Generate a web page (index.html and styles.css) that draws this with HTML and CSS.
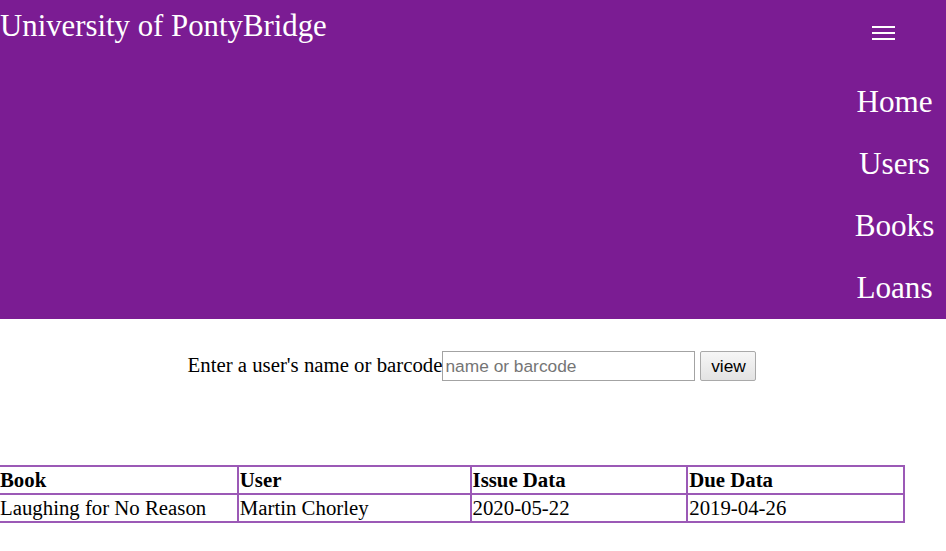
FILE: index.html
```html
<!DOCTYPE html>
<html>
<head>
<meta charset="utf-8">
<title>University of PontyBridge</title>
<link rel="stylesheet" href="styles.css">
</head>
<body>
<header class="site-header">
  <h1 class="site-title">University of PontyBridge</h1>
  <div class="nav-col">
    <div class="hamburger"><span></span><span></span><span></span></div>
    <nav class="nav">
      <a href="#">Home</a>
      <a href="#">Users</a>
      <a href="#">Books</a>
      <a href="#">Loans</a>
    </nav>
  </div>
</header>
<main>
  <form class="search">
    <label class="search-label" for="q">Enter a user's name or barcode</label><input id="q" class="search-input" type="text" placeholder="name or barcode"><button class="search-btn" type="button">view</button>
  </form>
  <table class="loans">
    <thead>
      <tr><th>Book</th><th>User</th><th>Issue Data</th><th>Due Data</th></tr>
    </thead>
    <tbody>
      <tr><td>Laughing for No Reason</td><td>Martin Chorley</td><td>2020-05-22</td><td>2019-04-26</td></tr>
    </tbody>
  </table>
</main>
</body>
</html>
```
FILE: styles.css
```css
html, body {
  margin: 0;
  padding: 0;
  background: #ffffff;
}
body {
  font-family: "Liberation Serif", "Times New Roman", serif;
  font-size: 20.8px;
  color: #000;
}
.site-header {
  background: #7b1c93;
  color: #fff;
  display: flex;
  justify-content: space-between;
  align-items: flex-start;
  height: 319px;
}
.site-title {
  margin: 0;
  padding-top: 9px;
  font-size: 30.8px;
  font-weight: normal;
  line-height: normal;
}
.nav-col {
  width: 103px;
  display: flex;
  flex-direction: column;
  align-items: center;
}
.hamburger {
  align-self: flex-start;
  margin-left: 29px;
  margin-top: 26px;
  width: 23px;
  height: 14px;
  display: flex;
  flex-direction: column;
  justify-content: space-between;
}
.hamburger span {
  display: block;
  height: 2px;
  background: #fff;
}
.nav {
  margin-top: 31px;
  display: flex;
  flex-direction: column;
  align-items: center;
}
.nav a {
  color: #fff;
  text-decoration: none;
  font-size: 31.2px;
  line-height: 62px;
}
.search {
  margin: 32px 0 0;
  padding-right: 2px;
  height: 30px;
  display: flex;
  justify-content: center;
  align-items: center;
}
.search-label {
  font-size: 20.8px;
  position: relative;
  top: -1px;
}
.search-input {
  box-sizing: border-box;
  width: 253px;
  height: 30px;
  margin: 0;
  padding: 1px 2px;
  border: 1px solid #a3a3a3;
  font-family: "Liberation Sans", Arial, sans-serif;
  font-size: 17.33px;
  color: #000;
}
.search-input::placeholder {
  color: #757575;
}
.search-btn {
  box-sizing: border-box;
  margin-left: 5px;
  width: 56px;
  height: 30px;
  padding: 0;
  border: 1px solid #a9a9a9;
  border-radius: 2px;
  background: linear-gradient(#f6f6f6, #e3e3e3);
  font-family: "Liberation Sans", Arial, sans-serif;
  font-size: 17.33px;
  color: #000;
}
.loans {
  margin-top: 84px;
  margin-left: -3px;
  border-collapse: collapse;
  border: 2px solid #9b59b6;
  width: 908px;
}
.loans th, .loans td {
  border: 2px solid #9b59b6;
  padding: 1px;
  text-align: left;
  font-size: 20.8px;
}
.loans th:nth-child(1) { width: 238px; }
.loans th:nth-child(2) { width: 231px; }
.loans th:nth-child(3) { width: 215px; }
.loans th:nth-child(4) { width: 215px; }
```
